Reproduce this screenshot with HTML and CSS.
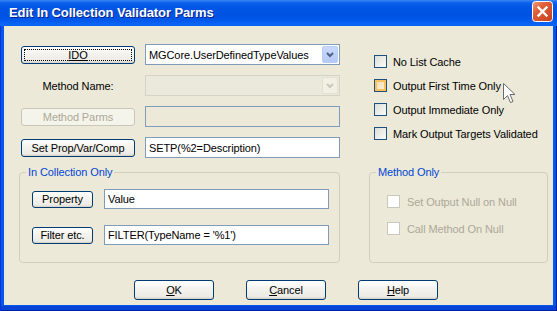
FILE: index.html
```html
<!DOCTYPE html>
<html lang="en">
<head>
  <meta charset="UTF-8" />
  <title>Edit In Collection Validator Parms</title>
  <link rel="stylesheet" href="styles.css">
</head>
<body>

  <div class="window">
    <!-- title bar -->
    <div class="titlebar">
      <span class="title">Edit In Collection Validator Parms</span>
      <button class="close" title="Close">
        <svg width="21" height="21" viewBox="0 0 21 21">
          <defs>
            <linearGradient id="closeFill" x1="0" y1="0" x2="1" y2="1">
              <stop offset="0" stop-color="#f0a080"/>
              <stop offset="0.35" stop-color="#e0603a"/>
              <stop offset="1" stop-color="#c2401c"/>
            </linearGradient>
          </defs>
          <rect x="0.5" y="0.5" width="20" height="20" rx="3" fill="url(#closeFill)" stroke="#fff"/>
          <path d="M6.5 6.5 L14.5 14.5 M14.5 6.5 L6.5 14.5" stroke="#fff" stroke-width="2.3" stroke-linecap="square"/>
        </svg>
      </button>
    </div>

    <div class="client">
      <div class="panes">

        <!-- main fields -->
        <div class="fields">
          <div class="row">
            <button class="btn wide focus"><u>IDO</u></button>
            <div class="combo">
              <span class="combo-text">MGCore.UserDefinedTypeValues</span>
              <span class="drop">
                <svg width="8" height="6" viewBox="0 0 8 6"><path d="M1 1 L4 4 L7 1" fill="none" stroke="#4d6185" stroke-width="2"/></svg>
              </span>
            </div>
          </div>
          <div class="row">
            <span class="label">Method Name:</span>
            <div class="combo disabled">
              <span class="combo-text"></span>
              <span class="drop">
                <svg width="8" height="6" viewBox="0 0 8 6"><path d="M1 1 L4 4 L7 1" fill="none" stroke="#c9c7ba" stroke-width="2"/></svg>
              </span>
            </div>
          </div>
          <div class="row">
            <button class="btn wide" disabled>Method Parms</button>
            <input class="edit" type="text" value="" disabled>
          </div>
          <div class="row">
            <button class="btn wide">Set Prop/Var/Comp</button>
            <input class="edit" type="text" value="SETP(%2=Description)" readonly>
          </div>
        </div>

        <!-- flags -->
        <div class="options">
          <label class="option"><span class="check"></span>No List Cache</label>
          <label class="option"><span class="check hot"></span>Output First Time Only</label>
          <label class="option"><span class="check"></span>Output Immediate Only</label>
          <label class="option"><span class="check"></span>Mark Output Targets Validated</label>
        </div>

        <fieldset class="group">
          <legend>In Collection Only</legend>
          <div class="group-body collection">
            <div class="row">
              <button class="btn small">Property</button>
              <input class="edit long" type="text" value="Value" readonly>
            </div>
            <div class="row">
              <button class="btn small">Filter etc.</button>
              <input class="edit long" type="text" value="FILTER(TypeName = '%1')" readonly>
            </div>
          </div>
        </fieldset>

        <fieldset class="group">
          <legend>Method Only</legend>
          <div class="group-body method">
            <label class="option off"><span class="check disabled"></span>Set Output Null on Null</label>
            <label class="option off"><span class="check disabled"></span>Call Method On Null</label>
          </div>
        </fieldset>

      </div>

      <div class="actions">
        <button class="btn action"><u>O</u>K</button>
        <button class="btn action"><u>C</u>ancel</button>
        <button class="btn action"><u>H</u>elp</button>
      </div>
    </div>

    <!-- mouse pointer over the dialog -->
    <svg class="cursor" width="13" height="21" viewBox="0 0 13 21">
      <path d="M0.5 0.5 L0.5 16.5 L4.5 12.5 L7.5 19.5 L10 18.5 L7 11.5 L12 11.5 Z" fill="#fff" stroke="#6b6b6b" stroke-width="1"/>
    </svg>
  </div>

</body>
</html>
```

FILE: styles.css
```css
* { box-sizing: border-box; }
body {
  margin: 0;
  background: #fff;
  font-family: 'Liberation Sans', Arial, sans-serif;
  font-size: 11px;
  letter-spacing: -0.1px;
  color: #000;
}

.window {
  position: relative;
  width: 557px; height: 311px;
  display: flex; flex-direction: column;
  padding: 0 4px 6px;
  background: #0058ea;
  box-shadow: inset 1px 0 #0831d9, inset -1px 0 #001ea0, inset 0 -1px #001ea0, inset 0 -5px #0843d8;
}

.titlebar {
  height: 26px;
  margin: 0 -4px;
  padding: 0 4px 0 9px;
  display: flex; align-items: center; justify-content: space-between;
  background: linear-gradient(180deg, #3a86f6 0, #0a5fe9 3px, #0055e5 8px, #0053e1 15px, #0058ea 20px, #0a64f6 24px, #0862f2 26px);
  color: #fff;
  font-weight: bold; font-size: 13px; letter-spacing: -0.1px;
  text-shadow: 1px 1px #0f1f8c;
}
.title { margin-top: -1px; }
.close {
  align-self: flex-start; margin-top: 1px;
  width: 21px; height: 21px; padding: 0;
  border: none; background: none; line-height: 0;
}

.client {
  flex: 1;
  background: #ece9d8;
  padding: 18px 0 5px 15px;
}

.panes {
  display: grid;
  grid-template-columns: 321px 179px;
  column-gap: 29px;
  row-gap: 8px;
}

.fields { display: flex; flex-direction: column; gap: 10px; }
.row { display: flex; align-items: center; gap: 10px; height: 21px; padding-left: 2px; }
.label { width: 114px; text-align: center; }

/* buttons */
.btn {
  font: inherit; letter-spacing: inherit; color: #000;
  padding: 0;
  border: 1px solid #003c74; border-radius: 3px;
  background: linear-gradient(180deg, #fff, #f4f3ee 40%, #ecebe6 86%, #d6d0c5);
  line-height: 14px;
  overflow: hidden;
}
.btn u { text-decoration-thickness: 1px; text-underline-offset: 1px; }
.btn.wide { width: 114px; height: 18px; }
.btn.small { width: 61px; height: 17px; }
.btn.focus { outline: 1px dotted #000; outline-offset: -4px; }
.btn:disabled {
  border-color: #c9c7ba; color: #aca899;
  background: #f5f4ea;
}

/* text boxes */
.edit {
  width: 195px; height: 21px;
  padding: 0 3px; margin: 0;
  border: 1px solid #7f9db9; border-radius: 0;
  background: #fff;
  font: inherit; letter-spacing: inherit; color: #000;
  outline: none;
}
.edit:disabled { background: #ece9d8; }
.edit.long { width: 225px; height: 20px; }

.combo {
  width: 195px; height: 21px;
  display: flex; align-items: center;
  padding: 1px;
  border: 1px solid #7f9db9;
  background: #fff;
}
.combo-text { flex: 1; padding-left: 2px; white-space: nowrap; }
.drop {
  width: 16px; height: 17px;
  display: flex; align-items: center; justify-content: center;
  border: 1px solid #b9cdf6; border-radius: 2px;
  background: linear-gradient(180deg, #cad9fc, #b5c9f6);
}
.combo.disabled { border-color: #d6d3c6; background: #ebe9dc; }
.combo.disabled .drop { border-color: #e3e0d2; background: #f2f0e4; }

/* check boxes */
.options { display: flex; flex-direction: column; gap: 11px; padding: 11px 0 0 5px; }
.option { display: flex; align-items: center; gap: 6px; height: 13px; white-space: nowrap; }
.option.off { color: #aca899; gap: 7px; }
.check {
  width: 13px; height: 13px; flex: none;
  border: 1px solid #1c5180;
  background: linear-gradient(135deg, #dcdcd7, #fcfcfb);
}
.check.hot {
  box-shadow: inset 0 0 0 2px #f8c05e;
  background: linear-gradient(135deg, #f0d8a8, #fbf4e2);
}
.check.disabled { border-color: #cac8bb; background: #fff; }

/* group boxes */
.group {
  margin: 0; padding: 0; min-width: 0;
  border: 1px solid #d0d0bf; border-radius: 4px;
}
.group legend {
  margin-left: 6px; padding: 0 2px;
  color: #0046d5; line-height: 13px;
}
.group-body.collection { display: flex; flex-direction: column; gap: 16px; padding: 10px 10px 17px 12px; }
.collection .row { height: 20px; padding-left: 0; gap: 11px; }
.group-body.method { display: flex; flex-direction: column; gap: 14px; padding: 16px 0 0 17px; }

/* bottom buttons */
.actions { display: flex; gap: 32px; margin-top: 17px; padding-left: 115px; }
.btn.action { width: 80px; height: 20px; }

.cursor { position: absolute; left: 503px; top: 83px; }
```
